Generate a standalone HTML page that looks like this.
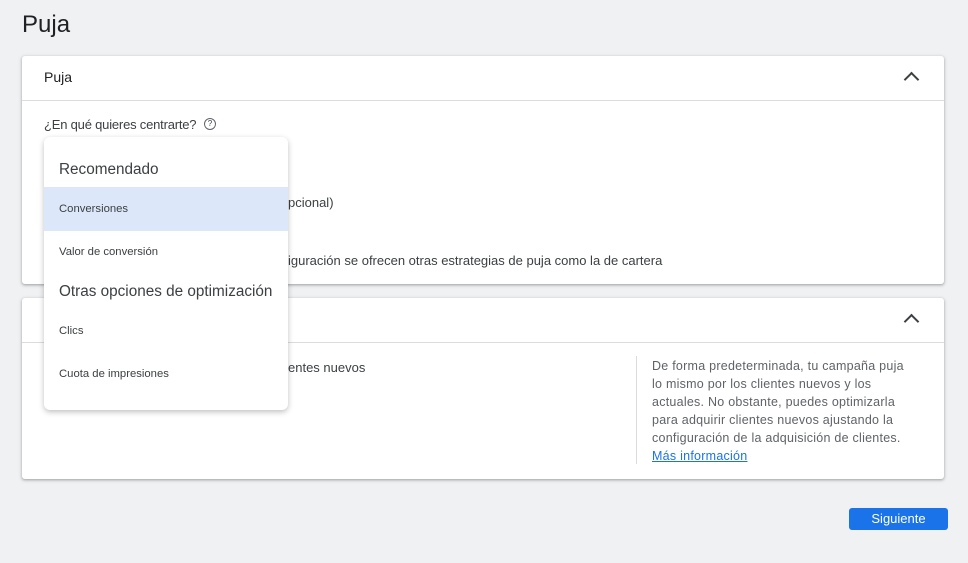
<!DOCTYPE html>
<html><head><meta charset="utf-8"><style>
body{margin:0;width:968px;height:563px;background:#f0f1f3;font-family:"Liberation Sans",sans-serif;color:#3c4043;position:relative;overflow:hidden}
.abs{position:absolute}
.card{position:absolute;background:#fff;border-radius:3px;box-shadow:0 1px 2px rgba(60,64,67,.3),0 1px 3px 1px rgba(60,64,67,.15)}
.chev{position:absolute;width:9px;height:9px;border-left:2px solid #3c4043;border-top:2px solid #3c4043;transform:rotate(45deg)}
.t13{font-size:13px}
</style></head><body>
<div class="abs" style="left:22px;top:11px;font-size:24px;color:#202124">Puja</div>

<div class="card" style="left:22px;top:56px;width:922px;height:228px">
  <div class="abs" style="left:22px;top:13px;font-size:14px;color:#202124">Puja</div>
  <div class="chev" style="left:884px;top:18px"></div>
  <div class="abs" style="left:0;top:44px;width:922px;height:1px;background:#dadce0"></div>
  <div class="abs t13" style="left:22px;top:61px;letter-spacing:-.2px">¿En qué quieres centrarte?</div>
  <div class="abs" style="left:182px;top:62px;width:10px;height:10px;border:1px solid #5f6368;border-radius:50%;font-size:8px;text-align:center;line-height:10px">?</div>
  <div class="abs t13" style="left:266px;top:139px">pcional)</div>
  <div class="abs t13" style="left:266px;top:197px">iguración se ofrecen otras estrategias de puja como la de cartera</div>
</div>

<div class="card" style="left:22px;top:298px;width:922px;height:181px">
  <div class="chev" style="left:884px;top:18px"></div>
  <div class="abs" style="left:0;top:44px;width:922px;height:1px;background:#dadce0"></div>
  <div class="abs t13" style="left:266px;top:62px">entes nuevos</div>
  <div class="abs" style="left:614px;top:58px;width:1px;height:108px;background:#dadce0"></div>
  <div class="abs" style="left:630px;top:59px;width:252px;font-size:12.5px;line-height:18px;letter-spacing:.25px;color:#5f6368">De forma predeterminada, tu campaña puja lo mismo por los clientes nuevos y los actuales. No obstante, puedes optimizarla para adquirir clientes nuevos ajustando la configuración de la adquisición de clientes.<br><span style="color:#1a73e8;text-decoration:underline">Más información</span></div>
</div>

<div class="abs" style="left:849px;top:508px;width:99px;height:22px;background:#1a73e8;border-radius:3px;color:#fff;font-size:13px;text-align:center;line-height:22px">Siguiente</div>

<div class="abs" style="left:44px;top:137px;width:244px;height:273px;background:#fff;border-radius:6px;box-shadow:0 2px 6px rgba(0,0,0,.25)">
  <div class="abs" style="left:15px;top:24px;font-size:15.3px;color:#3c4043">Recomendado</div>
  <div class="abs" style="left:0;top:50px;width:244px;height:44px;background:#dce8f9"></div>
  <div class="abs" style="left:15px;top:66px;font-size:11.3px">Conversiones</div>
  <div class="abs" style="left:15px;top:109px;font-size:11.3px">Valor de conversión</div>
  <div class="abs" style="left:15px;top:146px;font-size:15.3px">Otras opciones de optimización</div>
  <div class="abs" style="left:15px;top:188px;font-size:11.3px">Clics</div>
  <div class="abs" style="left:15px;top:231px;font-size:11.3px">Cuota de impresiones</div>
</div>
</body></html>
